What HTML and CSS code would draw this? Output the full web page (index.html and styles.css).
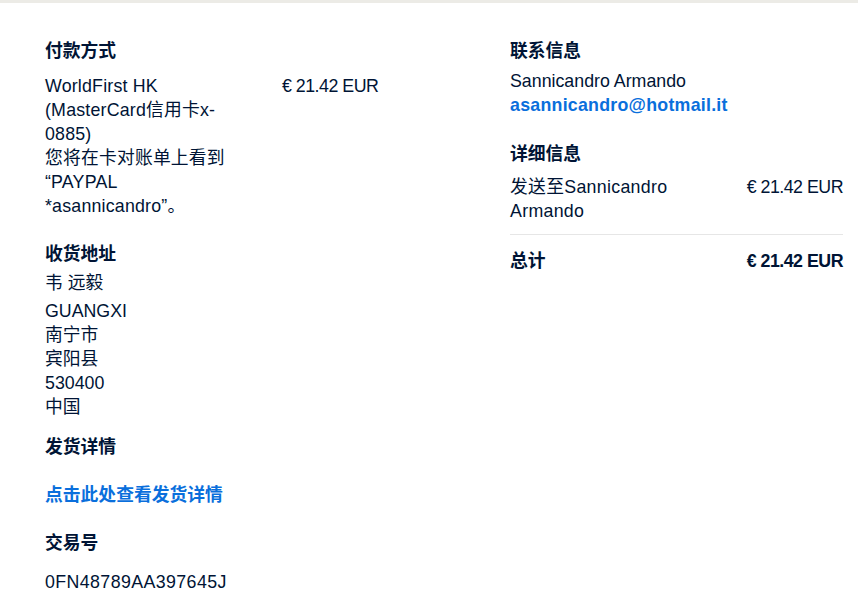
FILE: index.html
```html
<!DOCTYPE html>
<html lang="zh-CN">
<head>
<meta charset="utf-8">
<title>交易详情</title>
<link rel="stylesheet" href="styles.css">
</head>
<body>
<div class="topbar"></div>
<main class="page">
  <div class="col col-left">
    <section class="sec sec-pay">
      <h2 class="head">付款方式</h2>
      <div class="pay-row">
        <div class="pay-desc">WorldFirst HK (MasterCard信用卡x-0885)<br>您将在卡对账单上看到 “PAYPAL *asannicandro”。</div>
        <div class="amt pay-amt">€ 21.42 EUR</div>
      </div>
    </section>
    <section class="sec sec-addr">
      <h2 class="head">收货地址</h2>
      <div class="addr-name">韦 远毅</div>
      <div class="addr">GUANGXI<br>南宁市<br>宾阳县<br>530400<br>中国</div>
    </section>
    <section class="sec sec-ship">
      <h2 class="head">发货详情</h2>
      <a class="link" href="#">点击此处查看发货详情</a>
    </section>
    <section class="sec sec-txn">
      <h2 class="head">交易号</h2>
      <div class="txn">0FN48789AA397645J</div>
    </section>
  </div>
  <div class="col col-right">
    <section class="sec sec-contact">
      <h2 class="head">联系信息</h2>
      <div class="contact">Sannicandro Armando<br><a class="email" href="#">asannicandro@hotmail.it</a></div>
    </section>
    <section class="sec sec-detail">
      <h2 class="head">详细信息</h2>
      <div class="line-row">
        <div class="line-desc">发送至Sannicandro Armando</div>
        <div class="amt line-amt">€ 21.42 EUR</div>
      </div>
      <div class="total-row">
        <div class="total-label">总计</div>
        <div class="amt total-amt">€ 21.42 EUR</div>
      </div>
    </section>
  </div>
</main>
</body>
</html>
```

FILE: styles.css
```css
html, body {
  margin: 0;
  padding: 0;
  background: #ffffff;
}
body {
  font-family: "Liberation Sans", "Noto Sans CJK SC", sans-serif;
  font-size: 17.8px;
  line-height: 24px;
  color: #001435;
}
.topbar {
  height: 3px;
  background: #ecebe6;
}
.page {
  display: grid;
  grid-template-columns: 465px 333px;
  padding: 36px 0 0 45px;
}
.head {
  margin: 0;
  font-size: 17.8px;
  line-height: 24px;
  font-weight: 700;
}
.amt {
  letter-spacing: -0.5px;
  white-space: nowrap;
}
.sec-pay .pay-row {
  display: flex;
  margin-top: 11px;
}
.pay-desc {
  width: 190px;
  letter-spacing: 0.2px;
}
.pay-amt {
  margin-left: 47px;
}
.sec-addr {
  margin-top: 24px;
}
.addr-name {
  margin-top: 5px;
}
.addr {
  margin-top: 4px;
}
.sec-ship {
  margin-top: 16px;
}
.link {
  display: block;
  margin-top: 24px;
  color: #0a6fdc;
  font-weight: 700;
  text-decoration: none;
}
.sec-txn {
  margin-top: 24px;
}
.txn {
  margin-top: 15px;
  letter-spacing: 0.4px;
}
.contact {
  margin-top: 6px;
}
.email {
  color: #0a6fdc;
  font-weight: 700;
  letter-spacing: 0.25px;
  text-decoration: none;
}
.sec-detail {
  margin-top: 25px;
}
.line-row {
  display: flex;
  justify-content: space-between;
  margin-top: 9px;
  padding-bottom: 11px;
  border-bottom: 1px solid #e6e6e6;
}
.line-desc {
  width: 200px;
  letter-spacing: 0.3px;
}
.total-row {
  display: flex;
  justify-content: space-between;
  padding-top: 14px;
  font-weight: 700;
}
```
